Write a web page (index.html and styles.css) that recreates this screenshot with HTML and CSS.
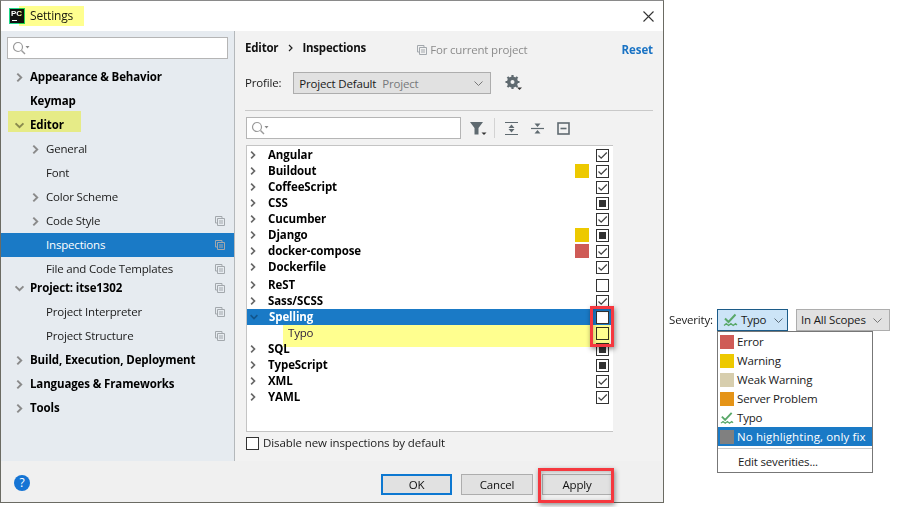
FILE: index.html
```html
<!DOCTYPE html>
<html lang="en">
<head>
<meta charset="utf-8">
<title>Settings</title>
<link rel="stylesheet" href="styles.css">
</head>
<body>
<svg class="defs" width="0" height="0" aria-hidden="true">
  <symbol id="chev-r" viewBox="0 0 8 12"><path d="M1.5 1.5 6 6l-4.500 4.500" fill="none" stroke="currentColor" stroke-width="2.200"/></symbol>
  <symbol id="chev-d" viewBox="0 0 12 8"><path d="M1.500 1.500 6 6l4.500-4.500" fill="none" stroke="currentColor" stroke-width="2.200"/></symbol>
  <symbol id="copy" viewBox="0 0 10 10"><path d="M.5.500h6.500v1.500M.5.500v6.500h1.500M2.500 2.500h7v7h-7zM4 5h4M4 7h4" fill="none" stroke="#a3a8ad" stroke-width="1"/></symbol>
  <symbol id="search" viewBox="0 0 18 14"><circle cx="6" cy="6" r="4.500" fill="none" stroke="#9a9a9a" stroke-width="1.200"/><path d="m9.500 9.500 3.500 3.500" stroke="#9a9a9a" stroke-width="1.400"/><path d="M13.500 5h4l-2 2.500z" fill="#8a8a8a"/></symbol>
  <symbol id="check" viewBox="0 0 13 13"><path d="M2.500 6.500 5.200 9.200 10.800 3.500" fill="none" stroke="#444" stroke-width="1.300"/></symbol>
  <symbol id="typo" viewBox="0 0 15 14"><path d="M2 5.500 5.500 9 12.500 1.500" fill="none" stroke="#59a869" stroke-width="2"/><path d="M1 12.500l2.300-1.800 2.300 1.800 2.300-1.800 2.300 1.800 2.300-1.800 1.500 1.300" fill="none" stroke="#59a869" stroke-width="1.300"/></symbol>
</svg>

<div class="dialog">
  <header class="titlebar">
    <span class="logo"><span class="logo-text">PC</span><i class="logo-bar"></i></span>
    <span class="title">Settings</span>
    <svg class="close" width="11" height="11" viewBox="0 0 11 11"><path d="m.5.500 10 10m0-10-10 10" stroke="#333" stroke-width="1.100"/></svg>
    <i class="mark mark-title"></i>
  </header>

  <div class="content">
    <nav class="sidebar">
      <div class="searchbox side-search"><svg width="18" height="14"><use href="#search"/></svg></div>
      <ul class="nav">
        <li class="n b"><svg class="ar" width="7" height="11"><use href="#chev-r"/></svg>Appearance &amp; Behavior</li>
        <li class="n b"><span class="noar"></span>Keymap</li>
        <li class="n b"><svg class="ad" width="11" height="7"><use href="#chev-d"/></svg>Editor<i class="mark mark-editor"></i></li>
        <li class="n l2"><svg class="ar" width="7" height="11"><use href="#chev-r"/></svg>General</li>
        <li class="n l2"><span class="noar"></span>Font</li>
        <li class="n l2"><svg class="ar" width="7" height="11"><use href="#chev-r"/></svg>Color Scheme</li>
        <li class="n l2"><svg class="ar" width="7" height="11"><use href="#chev-r"/></svg>Code Style<svg class="cp" width="10" height="10"><use href="#copy"/></svg></li>
        <li class="n l2 sel"><span class="noar"></span>Inspections<svg class="cp" width="10" height="10"><use href="#copy"/></svg></li>
        <li class="n l2"><span class="noar"></span>File and Code Templates<svg class="cp" width="10" height="10"><use href="#copy"/></svg></li>
        <li class="n b tight"><svg class="ad" width="11" height="7"><use href="#chev-d"/></svg>Project: itse1302<svg class="cp" width="10" height="10"><use href="#copy"/></svg></li>
        <li class="n l2"><span class="noar"></span>Project Interpreter<svg class="cp" width="10" height="10"><use href="#copy"/></svg></li>
        <li class="n l2"><span class="noar"></span>Project Structure<svg class="cp" width="10" height="10"><use href="#copy"/></svg></li>
        <li class="n b"><svg class="ar" width="7" height="11"><use href="#chev-r"/></svg>Build, Execution, Deployment</li>
        <li class="n b"><svg class="ar" width="7" height="11"><use href="#chev-r"/></svg>Languages &amp; Frameworks</li>
        <li class="n b"><svg class="ar" width="7" height="11"><use href="#chev-r"/></svg>Tools</li>
      </ul>
    </nav>

    <main class="main">
      <div class="crumbs">
        <span class="crumb">Editor</span>
        <svg class="crumb-sep" width="5" height="8" viewBox="0 0 5 8"><path d="m1 1 3 3-3 3" fill="none" stroke="#222" stroke-width="1.200"/></svg>
        <span class="crumb">Inspections</span>
        <span class="scope"><svg width="10" height="10"><use href="#copy"/></svg>For current project</span>
        <span class="reset">Reset</span>
      </div>

      <div class="profile">
        <span>Profile:</span>
        <div class="combo profile-combo"><span>Project Default</span><span class="muted">Project</span>
          <svg class="combo-ar" width="9" height="5" viewBox="0 0 9 5"><path d="m.5.500 4 4 4-4" fill="none" stroke="#777" stroke-width="1"/></svg>
        </div>
        <svg class="gear" width="18" height="16" viewBox="0 0 18 16"><circle cx="7.500" cy="7" r="4" fill="none" stroke="#5f6a70" stroke-width="3"/><path d="M7.500 0v14M.5 7h14M2.500 2l10 10M12.500 2l-10 10" stroke="#5f6a70" stroke-width="2.200"/><circle cx="7.500" cy="7" r="2" fill="#f2f2f2"/><path d="M12 12.500h5l-2.500 2.500z" fill="#333"/></svg>
      </div>

      <hr class="rule">

      <div class="toolbar">
        <div class="searchbox tree-search"><svg width="18" height="14"><use href="#search"/></svg></div>
        <svg class="filter" width="17" height="15" viewBox="0 0 17 15"><path d="M0 1h13L8.500 7v6.500h-4V7z" fill="#5f6a70"/><path d="M11.500 11.500h5L14 14z" fill="#333"/></svg>
        <i class="tool-sep"></i>
        <svg class="tool" width="13" height="13" viewBox="0 0 13 13"><path d="M0 .5h13M0 12.500h13" stroke="#5f6a70" stroke-width="1.200"/><path d="M6.500 2.500 9.500 6h-6zM6.500 10.500 3.500 7h6z" fill="#5f6a70"/></svg>
        <svg class="tool" width="13" height="13" viewBox="0 0 13 13"><path d="M0 6.500h13" stroke="#5f6a70" stroke-width="1.200"/><path d="M6.500 5 3.500 1.500h6zM6.500 8l3 3.500h-6z" fill="#5f6a70"/></svg>
        <svg class="tool" width="13" height="13" viewBox="0 0 13 13"><rect x="1" y="1" width="11" height="11" fill="none" stroke="#5f6a70" stroke-width="1.600"/><path d="M3.500 6.500h6" stroke="#5f6a70" stroke-width="1.600"/></svg>
      </div>

      <div class="tree">
        <div class="row"><svg class="tr" width="6" height="10"><use href="#chev-r"/></svg><span class="name">Angular</span><span class="cb"><svg width="13" height="13"><use href="#check"/></svg></span></div>
        <div class="row"><svg class="tr" width="6" height="10"><use href="#chev-r"/></svg><span class="name">Buildout</span><i class="sw yellow"></i><span class="cb"><svg width="13" height="13"><use href="#check"/></svg></span></div>
        <div class="row"><svg class="tr" width="6" height="10"><use href="#chev-r"/></svg><span class="name">CoffeeScript</span><span class="cb"><svg width="13" height="13"><use href="#check"/></svg></span></div>
        <div class="row"><svg class="tr" width="6" height="10"><use href="#chev-r"/></svg><span class="name">CSS</span><span class="cb"><i class="fill"></i></span></div>
        <div class="row"><svg class="tr" width="6" height="10"><use href="#chev-r"/></svg><span class="name">Cucumber</span><span class="cb"><svg width="13" height="13"><use href="#check"/></svg></span></div>
        <div class="row"><svg class="tr" width="6" height="10"><use href="#chev-r"/></svg><span class="name">Django</span><i class="sw yellow"></i><span class="cb"><i class="fill"></i></span></div>
        <div class="row"><svg class="tr" width="6" height="10"><use href="#chev-r"/></svg><span class="name">docker-compose</span><i class="sw red"></i><span class="cb"><svg width="13" height="13"><use href="#check"/></svg></span></div>
        <div class="row"><svg class="tr" width="6" height="10"><use href="#chev-r"/></svg><span class="name">Dockerfile</span><span class="cb"><svg width="13" height="13"><use href="#check"/></svg></span></div>
        <div class="row after-gap"><svg class="tr" width="6" height="10"><use href="#chev-r"/></svg><span class="name">ReST</span><span class="cb"></span></div>
        <div class="row"><svg class="tr" width="6" height="10"><use href="#chev-r"/></svg><span class="name">Sass/SCSS</span><span class="cb"><svg width="13" height="13"><use href="#check"/></svg></span></div>
        <div class="row row-sel"><svg class="td" width="10" height="6"><use href="#chev-d"/></svg><span class="name">Spelling</span><span class="cb cb-white"></span></div>
        <div class="row row-child"><span class="child-name">Typo</span><span class="cb"></span></div>
        <div class="row"><svg class="tr" width="6" height="10"><use href="#chev-r"/></svg><span class="name">SQL</span><span class="cb"><i class="fill"></i></span></div>
        <div class="row"><svg class="tr" width="6" height="10"><use href="#chev-r"/></svg><span class="name">TypeScript</span><span class="cb"><i class="fill"></i></span></div>
        <div class="row"><svg class="tr" width="6" height="10"><use href="#chev-r"/></svg><span class="name">XML</span><span class="cb"><svg width="13" height="13"><use href="#check"/></svg></span></div>
        <div class="row"><svg class="tr" width="6" height="10"><use href="#chev-r"/></svg><span class="name">YAML</span><span class="cb"><svg width="13" height="13"><use href="#check"/></svg></span></div>
        <i class="mark mark-typo"></i>
        <i class="redbox redbox-check"></i>
      </div>

      <label class="disable"><span class="cb"></span>Disable new inspections by default</label>
    </main>
  </div>

  <footer class="footer">
    <span class="help">?</span>
    <span class="btn btn-ok">OK</span>
    <span class="btn">Cancel</span>
    <span class="btn btn-apply">Apply<i class="redbox redbox-apply"></i></span>
  </footer>
</div>

<aside class="severity">
  <span class="sev-label">Severity:</span>
  <div class="combo sev-combo"><svg width="15" height="14"><use href="#typo"/></svg><span>Typo</span>
    <svg class="combo-ar" width="9" height="5" viewBox="0 0 9 5"><path d="m.5.500 4 4 4-4" fill="none" stroke="#5a6a78" stroke-width="1"/></svg>
    <ul class="menu">
      <li><i class="sw red"></i>Error</li>
      <li><i class="sw yellow"></i>Warning</li>
      <li><i class="sw weak"></i>Weak Warning</li>
      <li><i class="sw orange"></i>Server Problem</li>
      <li><svg width="14" height="14"><use href="#typo"/></svg>Typo</li>
      <li class="menu-sel"><i class="sw gray"></i>No highlighting, only fix</li>
      <li class="menu-sep"></li>
      <li class="menu-edit">Edit severities...</li>
    </ul>
  </div>
  <div class="combo scope-combo"><span>In All Scopes</span>
    <svg class="combo-ar" width="9" height="5" viewBox="0 0 9 5"><path d="m.5.500 4 4 4-4" fill="none" stroke="#777" stroke-width="1"/></svg>
  </div>
</aside>
</body>
</html>
```

FILE: styles.css
```css
* { box-sizing: border-box; }
html, body { margin: 0; padding: 0; }
body {
  width: 897px;
  height: 507px;
  overflow: hidden;
  display: flex;
  align-items: flex-start;
  background: #fff;
  font: 11.5px/16px "Open Sans", "Noto Sans", sans-serif;
  letter-spacing: -.18px;
  color: #1a1a1a;
}
ul { list-style: none; margin: 0; padding: 0; }
i { display: block; }
svg { display: block; flex: none; }
.defs { position: absolute; }

.dialog {
  width: 664px;
  height: 503px;
  flex: none;
  display: flex;
  flex-direction: column;
  border: 1px solid #6b6b63;
  border-top-color: #8a8a8a;
  background: #f0f0f0;
}
.titlebar {
  position: relative;
  height: 30px;
  flex: none;
  display: flex;
  align-items: center;
  padding: 0 9px 0 8px;
  background: #fff;
}
.logo {
  width: 16px;
  height: 16px;
  margin-top: -1px;
  background: #111;
  border: 1px solid #21d789;
  position: relative;
  flex: none;
}
.logo-text {
  position: absolute;
  left: 1px;
  top: 0;
  font: bold 8px/9px "Liberation Sans", sans-serif;
  color: #fff;
}
.logo-bar { position: absolute; left: 2px; bottom: 2px; width: 5px; height: 1px; background: #fff; }
.title { margin-left: 5px; font-size: 12px; }
.close { margin-left: auto; }

.mark { position: absolute; background: #ffff8f; mix-blend-mode: multiply; }
.mark-title { left: 18px; top: 5px; width: 65px; height: 20px; }
.mark-editor { left: 7px; top: -2px; width: 73px; height: 21px; }
.mark-typo { left: 36px; top: 179px; width: 327px; height: 22px; }

.content { flex: 1; display: flex; min-height: 0; }
.sidebar {
  width: 234px;
  flex: none;
  background: #e6ebf0;
  border-right: 1px solid #b4b8bb;
  padding: 6px 6px 0 6px;
}
.searchbox {
  display: flex;
  align-items: center;
  height: 22px;
  background: #fff;
  border: 1px solid #b5b5b5;
  padding-left: 4px;
}
.side-search { width: 221px; }
.nav { margin: 6px -6px 0; }
.n {
  position: relative;
  height: 24px;
  display: flex;
  align-items: center;
  padding-left: 14px;
  white-space: nowrap;
}
.n.l2 { padding-left: 30px; }
.n.b { font-weight: 700; color: #000; letter-spacing: -.13px; }
.ar { margin-right: 7px; margin-left: 1px; color: #8a8a8a; }
.ad { margin-right: 5px; margin-left: -1px; color: #8a8a8a; }
.noar { width: 15px; flex: none; }
.n.l2 .noar { width: 14px; margin-left: 1px; }
.tight { margin-top: -5px; }
.cp { margin-left: auto; margin-right: 9px; }
.sel { background: #1a7ac6; color: #fff; }

.main { flex: 1; min-width: 0; padding: 0 10px 0 10px; background: #f2f2f2; }
.crumbs {
  display: flex;
  align-items: center;
  height: 18px;
  margin-top: 8px;
  position: relative;
}
.crumb { font-weight: 700; color: #111; letter-spacing: -.2px; }
.crumb-sep { margin: 0 9px 0 10px; }
.scope { display: flex; align-items: center; gap: 3px; margin: 4px 0 0 51px; color: #8c8c8c; }
.reset { margin: 4px 0 0 auto; font-weight: 700; color: #1a73c4; letter-spacing: -.1px; }

.profile { display: flex; align-items: center; height: 22px; margin-top: 15px; }
.combo {
  position: relative;
  display: flex;
  align-items: center;
  height: 22px;
  border: 1px solid #adadad;
  background: #e1e1e1;
}
.combo-ar { position: absolute; right: 7px; top: 8px; }
.profile-combo { width: 198px; margin-left: 12px; padding-left: 5px; padding-top: 1px; gap: 6px; }
.muted { color: #77797b; }
.gear { margin-left: 14px; }
.rule { height: 1px; border: 0; margin: 16px 0 0; background: #c9c9c9; }

.toolbar { display: flex; align-items: center; height: 22px; margin: 6px 0 0 1px; }
.tree-search { width: 215px; }
.filter { margin-left: 9px; }
.tool-sep { width: 1px; height: 20px; background: #d3d3d3; margin: 0 10px 0 7px; }
.tool { margin-right: 13px; }

.tree {
  position: relative;
  width: 367px;
  height: 287px;
  margin: 6px 0 0 1px;
  padding-top: 1px;
  background: #fff;
  border: 1px solid #c4c4c4;
  border-right: 0;
}
.row {
  display: flex;
  align-items: center;
  height: 16px;
  padding-left: 3px;
  padding-right: 4px;
}
.after-gap { margin-top: 2px; }
.tr { margin-right: 12px; color: #666; }
.td { margin: 0 10px 0 -1px; color: #12558c; }
.name { font-weight: 700; color: #000; letter-spacing: -.1px; }
.child-name { margin-left: 38px; color: #2a1a66; }
.row-sel { background: #1a7ac6; }
.row-sel .name { color: #fff; }
.sw { width: 14px; height: 14px; flex: none; }
.row .sw { margin-left: auto; margin-right: 7px; }
.row .cb { margin-left: 0; }
.row > .name + .cb, .row > .child-name + .cb { margin-left: auto; }
.cb {
  width: 13px;
  height: 13px;
  flex: none;
  display: flex;
  align-items: center;
  justify-content: center;
  border: 1px solid #333;
  background: #fff;
}
.cb svg { margin: -1px; }
.cb-white { background: #fff; }
.fill { width: 7px; height: 7px; background: #333; }
.yellow { background: #edc900; }
.red { background: #cf5b56; }
.weak { background: #d7ceae; }
.orange { background: #e59417; }
.gray { background: #808080; }

.redbox {
  position: absolute;
  border: 3px solid #f5383f;
  box-shadow: 1px 2px 5px rgba(0, 0, 0, .45), inset 1px 1px 4px rgba(0, 0, 0, .25);
}
.redbox-check { left: 343px; top: 160px; width: 24px; height: 41px; }
.redbox-apply { left: -5px; top: -7px; width: 76px; height: 35px; }

.disable { display: flex; align-items: center; gap: 4px; height: 16px; margin: 3px 0 0 1px; letter-spacing: -.1px; }

.footer {
  position: relative;
  height: 41px;
  flex: none;
  display: flex;
  align-items: flex-start;
  padding: 13px 0 0 13px;
  background: #f0f0f0;
}
.help {
  width: 16px;
  height: 16px;
  border-radius: 50%;
  margin-top: 1px;
  background: #1574d4;
  color: #fff;
  text-align: center;
  font: 12px/16px "Open Sans", sans-serif;
}
.btn {
  position: relative;
  width: 72px;
  height: 21px;
  border: 1px solid #adadad;
  background: #e1e1e1;
  text-align: center;
  line-height: 19px;
  color: #111;
  margin-left: 9px;
}
.btn-ok { margin-left: 351px; width: 71px; border: 2px solid #0d78d1; line-height: 17px; }
.btn-apply { width: 70px; }

.severity {
  position: relative;
  flex: 1;
  display: flex;
  align-items: center;
  padding: 309px 0 0 5px;
  height: 331px;
}
.sev-label { width: 48px; flex: none; }
.sev-combo {
  width: 71px;
  background: #cce4f7;
  border-color: #1c5b88;
  padding-left: 5px;
  gap: 3px;
}
.sev-combo > .combo-ar { right: 4px; }
.scope-combo { width: 94px; margin-left: 8px; padding-left: 4px; }
.menu {
  position: absolute;
  left: -1px;
  top: 21px;
  width: 156px;
  height: 142px;
  background: #fff;
  border: 1px solid #777;
  z-index: 2;
}
.menu li {
  display: flex;
  align-items: center;
  gap: 3px;
  height: 19px;
  padding-left: 2px;
  white-space: nowrap;
}
.menu .menu-sel { background: #1a7ac6; color: #fff; letter-spacing: .12px; }
.menu .menu-sep { height: 1px; margin-top: 2px; background: #c9c9c9; }
.menu .menu-edit { padding-left: 20px; height: 26px; }
```
